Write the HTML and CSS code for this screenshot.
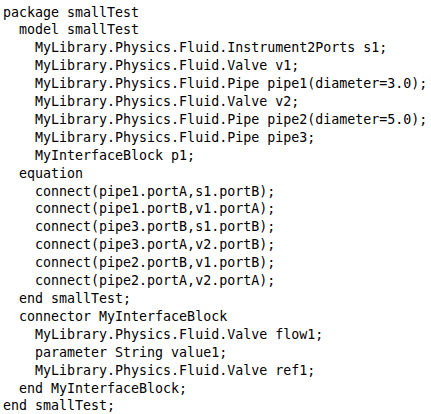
FILE: index.html
```html
<!DOCTYPE html>
<html>
<head>
<meta charset="utf-8">
<link rel="stylesheet" href="styles.css">
</head>
<body>
<pre class="code">package smallTest
  model smallTest
    MyLibrary.Physics.Fluid.Instrument2Ports s1;
    MyLibrary.Physics.Fluid.Valve v1;
    MyLibrary.Physics.Fluid.Pipe pipe1(diameter=3.0);
    MyLibrary.Physics.Fluid.Valve v2;
    MyLibrary.Physics.Fluid.Pipe pipe2(diameter=5.0);
    MyLibrary.Physics.Fluid.Pipe pipe3;
    MyInterfaceBlock p1;
  equation
    connect(pipe1.portA,s1.portB);
    connect(pipe1.portB,v1.portA);
    connect(pipe3.portB,s1.portB);
    connect(pipe3.portA,v2.portB);
    connect(pipe2.portB,v1.portB);
    connect(pipe2.portA,v2.portA);
  end smallTest;
  connector MyInterfaceBlock
    MyLibrary.Physics.Fluid.Valve flow1;
    parameter String value1;
    MyLibrary.Physics.Fluid.Valve ref1;
  end MyInterfaceBlock;
end smallTest;</pre>
</body>
</html>
```
FILE: styles.css
```css
html, body {
  margin: 0;
  padding: 0;
  background: #ffffff;
}
.code {
  margin: 0;
  padding: 3.5px 0 0 3px;
  font-family: "DejaVu Sans Mono", "Liberation Mono", monospace;
  font-size: 13.3px;
  line-height: 17.9px;
  color: #000000;
  white-space: pre;
}
```
